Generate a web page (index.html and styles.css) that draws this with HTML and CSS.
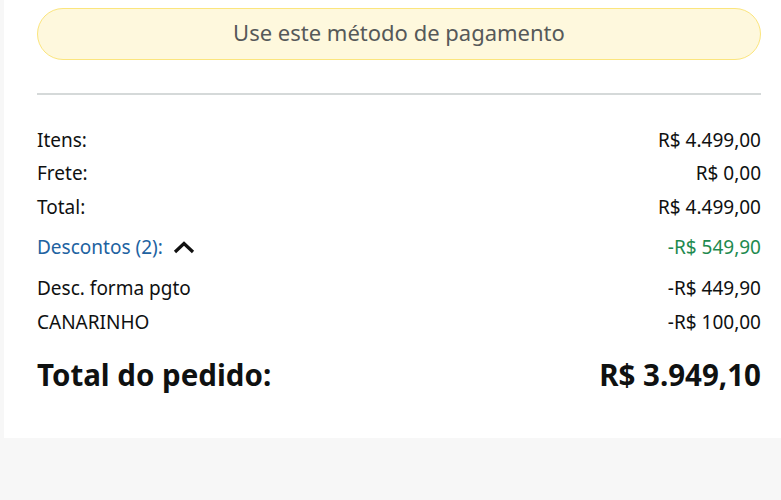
FILE: index.html
```html
<!DOCTYPE html>
<html lang="pt-BR">
<head>
  <meta charset="UTF-8">
  <meta name="viewport" content="width=device-width, initial-scale=1.0">
  <title>Resumo do pedido</title>
  <link rel="stylesheet" href="styles.css">
</head>
<body>
  <div class="page">
    <section class="summary-card">
      <button class="pay-button">Use este método de pagamento</button>
      <hr class="divider">

      <div class="rows">
        <div class="row"><span>Itens:</span><span>R$ 4.499,00</span></div>
        <div class="row"><span>Frete:</span><span>R$ 0,00</span></div>
        <div class="row"><span>Total:</span><span>R$ 4.499,00</span></div>
        <div class="row row-discount">
          <span class="discount-toggle">Descontos (2):
            <svg class="chevron" width="22" height="14" viewBox="0 0 22 14"><path d="M2 12 L11 3.5 L20 12" fill="none" stroke="#111" stroke-width="3.2"/></svg>
          </span>
          <span class="discount-value">-R$ 549,90</span>
        </div>
        <div class="row row-sub"><span>Desc. forma pgto</span><span>-R$ 449,90</span></div>
        <div class="row row-sub"><span>CANARINHO</span><span>-R$ 100,00</span></div>
      </div>

      <div class="row order-total"><span>Total do pedido:</span><span>R$ 3.949,10</span></div>
    </section>
  </div>
</body>
</html>
```

FILE: styles.css
```css
body {
  font-family: 'Noto Sans', 'Open Sans', sans-serif;
  margin: 0;
  padding: 0;
  background-color: #f7f7f7;
  color: #0f1111;
}
.page {
  padding-left: 4px;
}
.summary-card {
  background-color: white;
  padding: 8px 20px 24px 33px;
  height: 406px;
}
.pay-button {
  display: block;
  width: 100%;
  height: 52px;
  padding: 0 0 4px;
  background-color: #fef8dd;
  border: 1px solid #fbe57d;
  border-radius: 26px;
  color: #565959;
  font-family: inherit;
  font-size: 22px;
  cursor: pointer;
}
.divider {
  border: none;
  border-top: 2px solid #d5d9d9;
  margin: 33px 0 0;
}
.rows {
  margin-top: 28px;
}
.row {
  display: flex;
  justify-content: space-between;
  align-items: center;
  font-size: 19px;
  height: 33.5px;
}
.row-discount {
  height: 47px;
}
.discount-toggle {
  color: #2162a1;
  display: flex;
  align-items: center;
  gap: 10px;
}
.discount-value {
  color: #1e8a4f;
}
.row-sub {
  height: 34px;
}
.order-total {
  font-size: 29.5px;
  font-weight: bold;
  height: 56px;
  margin-top: 8px;
}
```
